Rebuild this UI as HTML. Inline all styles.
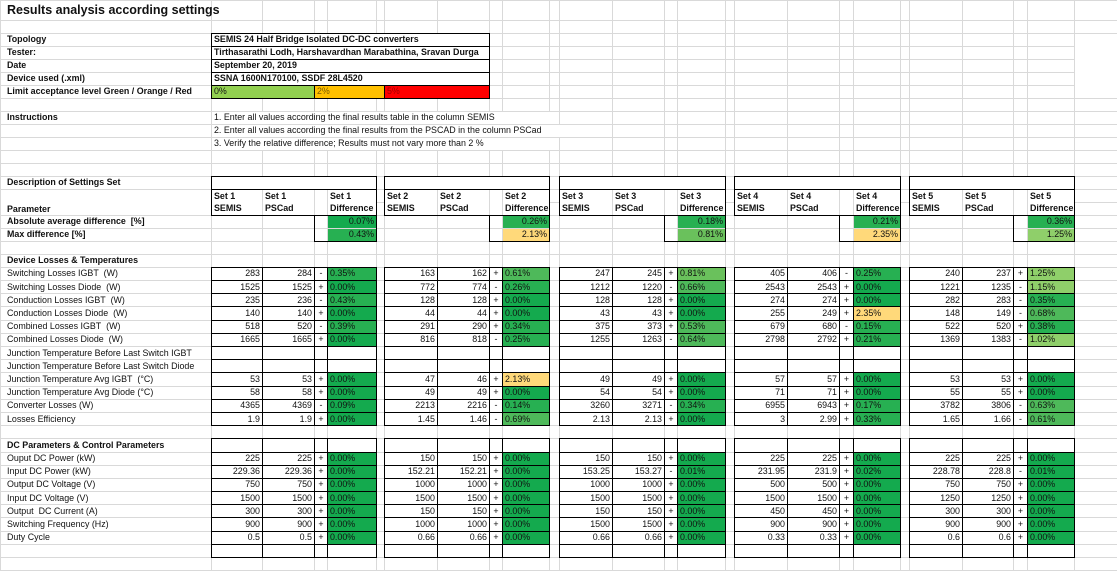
<!DOCTYPE html>
<html><head><meta charset="utf-8"><style>
html,body{margin:0;padding:0;background:#fff;width:1117px;height:559px;overflow:hidden}
table{border-collapse:collapse;table-layout:fixed;position:absolute;left:0;top:0;width:1117px}
td{border:1px solid #d9d9d9;padding:0 2px;font-family:"Liberation Sans",sans-serif;font-size:8.9px;color:#111;white-space:nowrap;overflow:hidden;line-height:11px;vertical-align:middle}
tr{height:13px}
tr:nth-child(n+19){height:13.2px}
.L{padding-left:6px}
.bd{font-weight:bold}
.b{border:1px double #000}
.r{text-align:right}
.c{text-align:center;padding:0}
.ov{overflow:visible}
.g0{background:#14aa4e}.g1{background:#27b052}.g2{background:#4eb95a}.g3{background:#6ac15c}.g4{background:#8fcf6a}.y{background:#ffd97a}
.hd{border-top:1px double #000;border-bottom:1px double #000;font-weight:bold;vertical-align:top;line-height:12px;padding-top:0}
.hl{border-left:1px double #000}.hr{border-right:1px double #000}.bb{border-bottom:1px double #000}
</style></head><body>
<table>
<colgroup><col style="width:211px">
<col style="width:51px"><col style="width:52px"><col style="width:13px"><col style="width:49px"><col style="width:8px">
<col style="width:53px"><col style="width:52px"><col style="width:13px"><col style="width:47px"><col style="width:10px">
<col style="width:53px"><col style="width:52px"><col style="width:13px"><col style="width:48px"><col style="width:9px">
<col style="width:53px"><col style="width:52px"><col style="width:14px"><col style="width:47px"><col style="width:9px">
<col style="width:53px"><col style="width:51px"><col style="width:14px"><col style="width:47px"><col style="width:43px">
</colgroup>
<tr style="height:20px"><td class="L bd ov" style="font-size:12.5px">Results analysis according settings</td><td></td><td></td><td></td><td></td><td></td><td></td><td></td><td></td><td></td><td></td><td></td><td></td><td></td><td></td><td></td><td></td><td></td><td></td><td></td><td></td><td></td><td></td><td></td><td></td><td></td></tr>
<tr style="height:12.5px"><td></td><td></td><td></td><td></td><td></td><td></td><td></td><td></td><td></td><td></td><td></td><td></td><td></td><td></td><td></td><td></td><td></td><td></td><td></td><td></td><td></td><td></td><td></td><td></td><td></td><td></td></tr>
<tr><td class="L bd">Topology</td><td colspan="7" class="b bd">SEMIS 24 Half Bridge Isolated DC-DC converters</td><td></td><td></td><td></td><td></td><td></td><td></td><td></td><td></td><td></td><td></td><td></td><td></td><td></td><td></td><td></td><td></td><td></td></tr>
<tr><td class="L bd">Tester:</td><td colspan="7" class="b bd">Tirthasarathi Lodh, Harshavardhan Marabathina, Sravan Durga</td><td></td><td></td><td></td><td></td><td></td><td></td><td></td><td></td><td></td><td></td><td></td><td></td><td></td><td></td><td></td><td></td><td></td></tr>
<tr><td class="L bd">Date</td><td colspan="7" class="b bd">September 20, 2019</td><td></td><td></td><td></td><td></td><td></td><td></td><td></td><td></td><td></td><td></td><td></td><td></td><td></td><td></td><td></td><td></td><td></td></tr>
<tr><td class="L bd">Device used (.xml)</td><td colspan="7" class="b bd">SSNA 1600N170100, SSDF 28L4520</td><td></td><td></td><td></td><td></td><td></td><td></td><td></td><td></td><td></td><td></td><td></td><td></td><td></td><td></td><td></td><td></td><td></td></tr>
<tr><td class="L bd">Limit acceptance level Green / Orange / Red</td><td colspan="2" class="b" style="background:#92d050">0%</td><td colspan="3" class="b" style="background:#ffc000;color:#7a5a00">2%</td><td colspan="2" class="b" style="background:#ff0000;color:#a00000">5%</td><td></td><td></td><td></td><td></td><td></td><td></td><td></td><td></td><td></td><td></td><td></td><td></td><td></td><td></td><td></td><td></td><td></td></tr>
<tr><td></td><td></td><td></td><td></td><td></td><td></td><td></td><td></td><td></td><td></td><td></td><td></td><td></td><td></td><td></td><td></td><td></td><td></td><td></td><td></td><td></td><td></td><td></td><td></td><td></td><td></td></tr>
<tr><td class="L bd">Instructions</td><td colspan="10" class="ov">1. Enter all values according the final results table in the column SEMIS</td><td></td><td></td><td></td><td></td><td></td><td></td><td></td><td></td><td></td><td></td><td></td><td></td><td></td><td></td><td></td></tr>
<tr><td></td><td colspan="11" class="ov">2. Enter all values according the final results from the PSCAD in the column PSCad</td><td></td><td></td><td></td><td></td><td></td><td></td><td></td><td></td><td></td><td></td><td></td><td></td><td></td><td></td></tr>
<tr><td></td><td colspan="10" class="ov">3. Verify the relative difference; Results must not vary more than 2 %</td><td></td><td></td><td></td><td></td><td></td><td></td><td></td><td></td><td></td><td></td><td></td><td></td><td></td><td></td><td></td></tr>
<tr><td></td><td></td><td></td><td></td><td></td><td></td><td></td><td></td><td></td><td></td><td></td><td></td><td></td><td></td><td></td><td></td><td></td><td></td><td></td><td></td><td></td><td></td><td></td><td></td><td></td><td></td></tr>
<tr><td></td><td></td><td></td><td></td><td></td><td></td><td></td><td></td><td></td><td></td><td></td><td></td><td></td><td></td><td></td><td></td><td></td><td></td><td></td><td></td><td></td><td></td><td></td><td></td><td></td><td></td></tr>
<tr><td class="L bd">Description of Settings Set</td><td colspan="4" class="b"></td><td></td><td colspan="4" class="b"></td><td></td><td colspan="4" class="b"></td><td></td><td colspan="4" class="b"></td><td></td><td colspan="4" class="b"></td><td></td></tr>
<tr><td rowspan="2" class="L bd" style="vertical-align:bottom">Parameter</td>
<td rowspan="2" class="hd hl">Set 1<br>SEMIS</td><td rowspan="2" class="hd">Set 1<br>PSCad</td><td rowspan="2" class="hd"></td><td rowspan="2" class="hd hr">Set 1<br>Difference</td><td></td>
<td rowspan="2" class="hd hl">Set 2<br>SEMIS</td><td rowspan="2" class="hd">Set 2<br>PSCad</td><td rowspan="2" class="hd"></td><td rowspan="2" class="hd hr">Set 2<br>Difference</td><td></td>
<td rowspan="2" class="hd hl">Set 3<br>SEMIS</td><td rowspan="2" class="hd">Set 3<br>PSCad</td><td rowspan="2" class="hd"></td><td rowspan="2" class="hd hr">Set 3<br>Difference</td><td></td>
<td rowspan="2" class="hd hl">Set 4<br>SEMIS</td><td rowspan="2" class="hd">Set 4<br>PSCad</td><td rowspan="2" class="hd"></td><td rowspan="2" class="hd hr">Set 4<br>Difference</td><td></td>
<td rowspan="2" class="hd hl">Set 5<br>SEMIS</td><td rowspan="2" class="hd">Set 5<br>PSCad</td><td rowspan="2" class="hd"></td><td rowspan="2" class="hd hr">Set 5<br>Difference</td><td></td></tr>
<tr><td></td><td></td><td></td><td></td><td></td><td></td></tr>
<tr><td class="L bd">Absolute average difference&nbsp; [%]</td>
<td></td><td></td><td class="hl"></td><td class="hr r g0">0.07%</td><td></td>
<td></td><td></td><td class="hl"></td><td class="hr r g1">0.26%</td><td></td>
<td></td><td></td><td class="hl"></td><td class="hr r g1">0.18%</td><td></td>
<td></td><td></td><td class="hl"></td><td class="hr r g1">0.21%</td><td></td>
<td></td><td></td><td class="hl"></td><td class="hr r g1">0.36%</td><td></td></tr>
<tr><td class="L bd">Max difference [%]</td>
<td></td><td></td><td class="hl bb"></td><td class="hr bb r g1">0.43%</td><td></td>
<td></td><td></td><td class="hl bb"></td><td class="hr bb r y">2.13%</td><td></td>
<td></td><td></td><td class="hl bb"></td><td class="hr bb r g3">0.81%</td><td></td>
<td></td><td></td><td class="hl bb"></td><td class="hr bb r y">2.35%</td><td></td>
<td></td><td></td><td class="hl bb"></td><td class="hr bb r g4">1.25%</td><td></td></tr>
<tr><td></td><td></td><td></td><td></td><td></td><td></td><td></td><td></td><td></td><td></td><td></td><td></td><td></td><td></td><td></td><td></td><td></td><td></td><td></td><td></td><td></td><td></td><td></td><td></td><td></td><td></td></tr>
<tr><td class="L bd">Device Losses &amp; Temperatures</td><td></td><td></td><td></td><td></td><td></td><td></td><td></td><td></td><td></td><td></td><td></td><td></td><td></td><td></td><td></td><td></td><td></td><td></td><td></td><td></td><td></td><td></td><td></td><td></td><td></td></tr>
<tr><td class="L">Switching Losses IGBT&nbsp; (W)</td>
<td class="b r">283</td><td class="b r">284</td><td class="b c">-</td><td class="b g1">0.35%</td><td></td>
<td class="b r">163</td><td class="b r">162</td><td class="b c">+</td><td class="b g2">0.61%</td><td></td>
<td class="b r">247</td><td class="b r">245</td><td class="b c">+</td><td class="b g3">0.81%</td><td></td>
<td class="b r">405</td><td class="b r">406</td><td class="b c">-</td><td class="b g1">0.25%</td><td></td>
<td class="b r">240</td><td class="b r">237</td><td class="b c">+</td><td class="b g4">1.25%</td><td></td></tr>
<tr><td class="L">Switching Losses Diode&nbsp; (W)</td>
<td class="b r">1525</td><td class="b r">1525</td><td class="b c">+</td><td class="b g0">0.00%</td><td></td>
<td class="b r">772</td><td class="b r">774</td><td class="b c">-</td><td class="b g1">0.26%</td><td></td>
<td class="b r">1212</td><td class="b r">1220</td><td class="b c">-</td><td class="b g2">0.66%</td><td></td>
<td class="b r">2543</td><td class="b r">2543</td><td class="b c">+</td><td class="b g0">0.00%</td><td></td>
<td class="b r">1221</td><td class="b r">1235</td><td class="b c">-</td><td class="b g4">1.15%</td><td></td></tr>
<tr><td class="L">Conduction Losses IGBT&nbsp; (W)</td>
<td class="b r">235</td><td class="b r">236</td><td class="b c">-</td><td class="b g1">0.43%</td><td></td>
<td class="b r">128</td><td class="b r">128</td><td class="b c">+</td><td class="b g0">0.00%</td><td></td>
<td class="b r">128</td><td class="b r">128</td><td class="b c">+</td><td class="b g0">0.00%</td><td></td>
<td class="b r">274</td><td class="b r">274</td><td class="b c">+</td><td class="b g0">0.00%</td><td></td>
<td class="b r">282</td><td class="b r">283</td><td class="b c">-</td><td class="b g1">0.35%</td><td></td></tr>
<tr><td class="L">Conduction Losses Diode&nbsp; (W)</td>
<td class="b r">140</td><td class="b r">140</td><td class="b c">+</td><td class="b g0">0.00%</td><td></td>
<td class="b r">44</td><td class="b r">44</td><td class="b c">+</td><td class="b g0">0.00%</td><td></td>
<td class="b r">43</td><td class="b r">43</td><td class="b c">+</td><td class="b g0">0.00%</td><td></td>
<td class="b r">255</td><td class="b r">249</td><td class="b c">+</td><td class="b y">2.35%</td><td></td>
<td class="b r">148</td><td class="b r">149</td><td class="b c">-</td><td class="b g2">0.68%</td><td></td></tr>
<tr><td class="L">Combined Losses IGBT&nbsp; (W)</td>
<td class="b r">518</td><td class="b r">520</td><td class="b c">-</td><td class="b g1">0.39%</td><td></td>
<td class="b r">291</td><td class="b r">290</td><td class="b c">+</td><td class="b g1">0.34%</td><td></td>
<td class="b r">375</td><td class="b r">373</td><td class="b c">+</td><td class="b g2">0.53%</td><td></td>
<td class="b r">679</td><td class="b r">680</td><td class="b c">-</td><td class="b g1">0.15%</td><td></td>
<td class="b r">522</td><td class="b r">520</td><td class="b c">+</td><td class="b g1">0.38%</td><td></td></tr>
<tr><td class="L">Combined Losses Diode&nbsp; (W)</td>
<td class="b r">1665</td><td class="b r">1665</td><td class="b c">+</td><td class="b g0">0.00%</td><td></td>
<td class="b r">816</td><td class="b r">818</td><td class="b c">-</td><td class="b g1">0.25%</td><td></td>
<td class="b r">1255</td><td class="b r">1263</td><td class="b c">-</td><td class="b g2">0.64%</td><td></td>
<td class="b r">2798</td><td class="b r">2792</td><td class="b c">+</td><td class="b g1">0.21%</td><td></td>
<td class="b r">1369</td><td class="b r">1383</td><td class="b c">-</td><td class="b g4">1.02%</td><td></td></tr>
<tr><td class="L">Junction Temperature Before Last Switch IGBT</td>
<td class="b"></td><td class="b"></td><td class="b"></td><td class="b"></td><td></td>
<td class="b"></td><td class="b"></td><td class="b"></td><td class="b"></td><td></td>
<td class="b"></td><td class="b"></td><td class="b"></td><td class="b"></td><td></td>
<td class="b"></td><td class="b"></td><td class="b"></td><td class="b"></td><td></td>
<td class="b"></td><td class="b"></td><td class="b"></td><td class="b"></td><td></td></tr>
<tr><td class="L">Junction Temperature Before Last Switch Diode</td>
<td class="b"></td><td class="b"></td><td class="b"></td><td class="b"></td><td></td>
<td class="b"></td><td class="b"></td><td class="b"></td><td class="b"></td><td></td>
<td class="b"></td><td class="b"></td><td class="b"></td><td class="b"></td><td></td>
<td class="b"></td><td class="b"></td><td class="b"></td><td class="b"></td><td></td>
<td class="b"></td><td class="b"></td><td class="b"></td><td class="b"></td><td></td></tr>
<tr><td class="L">Junction Temperature Avg IGBT&nbsp; (°C)</td>
<td class="b r">53</td><td class="b r">53</td><td class="b c">+</td><td class="b g0">0.00%</td><td></td>
<td class="b r">47</td><td class="b r">46</td><td class="b c">+</td><td class="b y">2.13%</td><td></td>
<td class="b r">49</td><td class="b r">49</td><td class="b c">+</td><td class="b g0">0.00%</td><td></td>
<td class="b r">57</td><td class="b r">57</td><td class="b c">+</td><td class="b g0">0.00%</td><td></td>
<td class="b r">53</td><td class="b r">53</td><td class="b c">+</td><td class="b g0">0.00%</td><td></td></tr>
<tr><td class="L">Junction Temperature Avg Diode (°C)</td>
<td class="b r">58</td><td class="b r">58</td><td class="b c">+</td><td class="b g0">0.00%</td><td></td>
<td class="b r">49</td><td class="b r">49</td><td class="b c">+</td><td class="b g0">0.00%</td><td></td>
<td class="b r">54</td><td class="b r">54</td><td class="b c">+</td><td class="b g0">0.00%</td><td></td>
<td class="b r">71</td><td class="b r">71</td><td class="b c">+</td><td class="b g0">0.00%</td><td></td>
<td class="b r">55</td><td class="b r">55</td><td class="b c">+</td><td class="b g0">0.00%</td><td></td></tr>
<tr><td class="L">Converter Losses (W)</td>
<td class="b r">4365</td><td class="b r">4369</td><td class="b c">-</td><td class="b g0">0.09%</td><td></td>
<td class="b r">2213</td><td class="b r">2216</td><td class="b c">-</td><td class="b g1">0.14%</td><td></td>
<td class="b r">3260</td><td class="b r">3271</td><td class="b c">-</td><td class="b g1">0.34%</td><td></td>
<td class="b r">6955</td><td class="b r">6943</td><td class="b c">+</td><td class="b g1">0.17%</td><td></td>
<td class="b r">3782</td><td class="b r">3806</td><td class="b c">-</td><td class="b g2">0.63%</td><td></td></tr>
<tr><td class="L">Losses Efficiency</td>
<td class="b r">1.9</td><td class="b r">1.9</td><td class="b c">+</td><td class="b g0">0.00%</td><td></td>
<td class="b r">1.45</td><td class="b r">1.46</td><td class="b c">-</td><td class="b g2">0.69%</td><td></td>
<td class="b r">2.13</td><td class="b r">2.13</td><td class="b c">+</td><td class="b g0">0.00%</td><td></td>
<td class="b r">3</td><td class="b r">2.99</td><td class="b c">+</td><td class="b g1">0.33%</td><td></td>
<td class="b r">1.65</td><td class="b r">1.66</td><td class="b c">-</td><td class="b g2">0.61%</td><td></td></tr>
<tr><td></td><td></td><td></td><td></td><td></td><td></td><td></td><td></td><td></td><td></td><td></td><td></td><td></td><td></td><td></td><td></td><td></td><td></td><td></td><td></td><td></td><td></td><td></td><td></td><td></td><td></td></tr>
<tr><td class="L bd">DC Parameters &amp; Control Parameters</td>
<td class="b"></td><td class="b"></td><td class="b"></td><td class="b"></td><td></td>
<td class="b"></td><td class="b"></td><td class="b"></td><td class="b"></td><td></td>
<td class="b"></td><td class="b"></td><td class="b"></td><td class="b"></td><td></td>
<td class="b"></td><td class="b"></td><td class="b"></td><td class="b"></td><td></td>
<td class="b"></td><td class="b"></td><td class="b"></td><td class="b"></td><td></td></tr>
<tr><td class="L">Ouput DC Power (kW)</td>
<td class="b r">225</td><td class="b r">225</td><td class="b c">+</td><td class="b g0">0.00%</td><td></td>
<td class="b r">150</td><td class="b r">150</td><td class="b c">+</td><td class="b g0">0.00%</td><td></td>
<td class="b r">150</td><td class="b r">150</td><td class="b c">+</td><td class="b g0">0.00%</td><td></td>
<td class="b r">225</td><td class="b r">225</td><td class="b c">+</td><td class="b g0">0.00%</td><td></td>
<td class="b r">225</td><td class="b r">225</td><td class="b c">+</td><td class="b g0">0.00%</td><td></td></tr>
<tr><td class="L">Input DC Power (kW)</td>
<td class="b r">229.36</td><td class="b r">229.36</td><td class="b c">+</td><td class="b g0">0.00%</td><td></td>
<td class="b r">152.21</td><td class="b r">152.21</td><td class="b c">+</td><td class="b g0">0.00%</td><td></td>
<td class="b r">153.25</td><td class="b r">153.27</td><td class="b c">-</td><td class="b g0">0.01%</td><td></td>
<td class="b r">231.95</td><td class="b r">231.9</td><td class="b c">+</td><td class="b g0">0.02%</td><td></td>
<td class="b r">228.78</td><td class="b r">228.8</td><td class="b c">-</td><td class="b g0">0.01%</td><td></td></tr>
<tr><td class="L">Output DC Voltage (V)</td>
<td class="b r">750</td><td class="b r">750</td><td class="b c">+</td><td class="b g0">0.00%</td><td></td>
<td class="b r">1000</td><td class="b r">1000</td><td class="b c">+</td><td class="b g0">0.00%</td><td></td>
<td class="b r">1000</td><td class="b r">1000</td><td class="b c">+</td><td class="b g0">0.00%</td><td></td>
<td class="b r">500</td><td class="b r">500</td><td class="b c">+</td><td class="b g0">0.00%</td><td></td>
<td class="b r">750</td><td class="b r">750</td><td class="b c">+</td><td class="b g0">0.00%</td><td></td></tr>
<tr><td class="L">Input DC Voltage (V)</td>
<td class="b r">1500</td><td class="b r">1500</td><td class="b c">+</td><td class="b g0">0.00%</td><td></td>
<td class="b r">1500</td><td class="b r">1500</td><td class="b c">+</td><td class="b g0">0.00%</td><td></td>
<td class="b r">1500</td><td class="b r">1500</td><td class="b c">+</td><td class="b g0">0.00%</td><td></td>
<td class="b r">1500</td><td class="b r">1500</td><td class="b c">+</td><td class="b g0">0.00%</td><td></td>
<td class="b r">1250</td><td class="b r">1250</td><td class="b c">+</td><td class="b g0">0.00%</td><td></td></tr>
<tr><td class="L">Output&nbsp; DC Current (A)</td>
<td class="b r">300</td><td class="b r">300</td><td class="b c">+</td><td class="b g0">0.00%</td><td></td>
<td class="b r">150</td><td class="b r">150</td><td class="b c">+</td><td class="b g0">0.00%</td><td></td>
<td class="b r">150</td><td class="b r">150</td><td class="b c">+</td><td class="b g0">0.00%</td><td></td>
<td class="b r">450</td><td class="b r">450</td><td class="b c">+</td><td class="b g0">0.00%</td><td></td>
<td class="b r">300</td><td class="b r">300</td><td class="b c">+</td><td class="b g0">0.00%</td><td></td></tr>
<tr><td class="L">Switching Frequency (Hz)</td>
<td class="b r">900</td><td class="b r">900</td><td class="b c">+</td><td class="b g0">0.00%</td><td></td>
<td class="b r">1000</td><td class="b r">1000</td><td class="b c">+</td><td class="b g0">0.00%</td><td></td>
<td class="b r">1500</td><td class="b r">1500</td><td class="b c">+</td><td class="b g0">0.00%</td><td></td>
<td class="b r">900</td><td class="b r">900</td><td class="b c">+</td><td class="b g0">0.00%</td><td></td>
<td class="b r">900</td><td class="b r">900</td><td class="b c">+</td><td class="b g0">0.00%</td><td></td></tr>
<tr><td class="L">Duty Cycle</td>
<td class="b r">0.5</td><td class="b r">0.5</td><td class="b c">+</td><td class="b g0">0.00%</td><td></td>
<td class="b r">0.66</td><td class="b r">0.66</td><td class="b c">+</td><td class="b g0">0.00%</td><td></td>
<td class="b r">0.66</td><td class="b r">0.66</td><td class="b c">+</td><td class="b g0">0.00%</td><td></td>
<td class="b r">0.33</td><td class="b r">0.33</td><td class="b c">+</td><td class="b g0">0.00%</td><td></td>
<td class="b r">0.6</td><td class="b r">0.6</td><td class="b c">+</td><td class="b g0">0.00%</td><td></td></tr>
<tr><td></td>
<td class="b"></td><td class="b"></td><td class="b"></td><td class="b"></td><td></td>
<td class="b"></td><td class="b"></td><td class="b"></td><td class="b"></td><td></td>
<td class="b"></td><td class="b"></td><td class="b"></td><td class="b"></td><td></td>
<td class="b"></td><td class="b"></td><td class="b"></td><td class="b"></td><td></td>
<td class="b"></td><td class="b"></td><td class="b"></td><td class="b"></td><td></td></tr>
<tr><td></td><td></td><td></td><td></td><td></td><td></td><td></td><td></td><td></td><td></td><td></td><td></td><td></td><td></td><td></td><td></td><td></td><td></td><td></td><td></td><td></td><td></td><td></td><td></td><td></td><td></td></tr>
</table>
</body></html>
